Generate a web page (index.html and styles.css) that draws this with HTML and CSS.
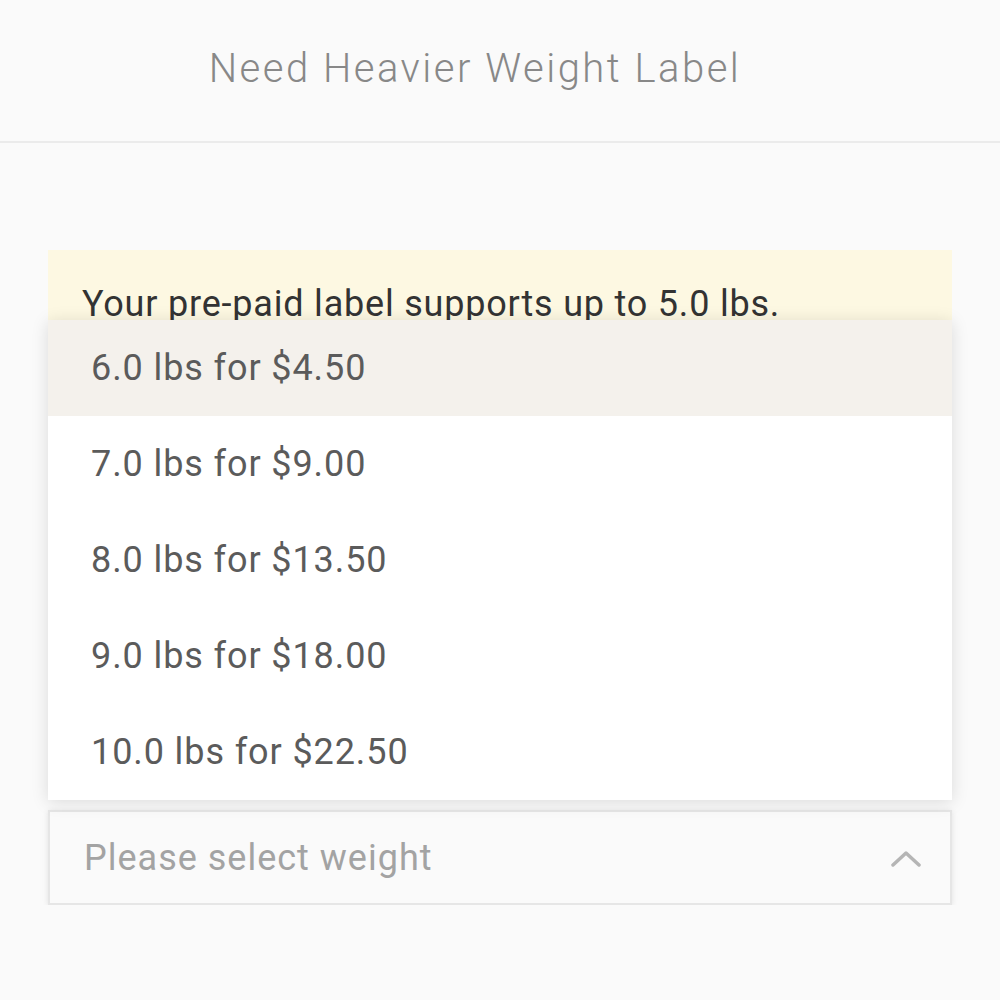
FILE: index.html
```html
<!DOCTYPE html>
<html lang="en">
<head>
    <meta charset="UTF-8">
    <meta name="viewport" content="width=device-width, initial-scale=1.0">
    <title>Need Heavier Weight Label</title>
    <link rel="stylesheet" href="styles.css">
</head>
<body>
    <header class="top-bar">
        <h1>Need Heavier Weight Label</h1>
    </header>

    <main class="content">
        <div class="notice">
            <p>Your pre-paid label supports up to 5.0 lbs.</p>
        </div>

        <div class="weight-field">
            <ul class="weight-menu">
                <li class="active">6.0 lbs for $4.50</li>
                <li>7.0 lbs for $9.00</li>
                <li>8.0 lbs for $13.50</li>
                <li>9.0 lbs for $18.00</li>
                <li>10.0 lbs for $22.50</li>
            </ul>
            <div class="weight-select">
                <span class="placeholder">Please select weight</span>
                <svg class="chevron" width="32" height="18" viewBox="0 0 32 18">
                    <path d="M3 16 L16 4 L29 16" fill="none" stroke="#b5b5b5" stroke-width="3.5" stroke-linecap="round" stroke-linejoin="round"/>
                </svg>
            </div>
        </div>
    </main>
</body>
</html>
```

FILE: styles.css
```css
:root {
    --page-bg: #fafafa;
    --line-color: #ebebeb;
    --notice-bg: #fdf8e2;
    --active-bg: #f4f1ec;
    --text-dark: #333;
    --text-item: #5b5b5b;
    --text-muted: #a3a3a3;
}
* {
    box-sizing: border-box;
}
body {
    margin: 0;
    font-family: 'Roboto', 'Liberation Sans', sans-serif;
    background-color: var(--page-bg);
    color: var(--text-dark);
}
.top-bar {
    height: 143px;
    display: flex;
    align-items: center;
    justify-content: center;
    padding-right: 50px;
    border-bottom: 2px solid var(--line-color);
}
.top-bar h1 {
    margin: 0 0 4px;
    font-size: 40px;
    font-weight: 300;
    letter-spacing: 2.5px;
    color: #888;
}
.content {
    padding: 107px 48px 0;
}
.notice {
    background-color: var(--notice-bg);
    padding: 31px 34px 0;
    height: 300px;
    margin-bottom: 260px;
}
.notice p {
    margin: 0;
    font-size: 36px;
    line-height: 46px;
    letter-spacing: 0.8px;
}
.weight-field {
    position: relative;
}
.weight-menu {
    position: absolute;
    left: 0;
    right: 0;
    bottom: calc(100% + 10px);
    margin: 0;
    padding: 0;
    list-style: none;
    background-color: white;
    box-shadow: 0 2px 16px rgba(0, 0, 0, 0.13);
}
.weight-menu li {
    height: 96px;
    display: flex;
    align-items: center;
    padding-left: 43px;
    font-size: 36px;
    letter-spacing: 0.9px;
    color: var(--text-item);
}
.weight-menu li.active {
    background-color: var(--active-bg);
}
.weight-select {
    height: 95px;
    display: flex;
    align-items: center;
    justify-content: space-between;
    padding: 0 28px 0 34px;
    border: 2px solid #e6e6e6;
    background-color: var(--page-bg);
    box-shadow: 0 1px 6px rgba(0, 0, 0, 0.1);
}
.placeholder {
    font-size: 36px;
    letter-spacing: 1px;
    color: var(--text-muted);
}
```
